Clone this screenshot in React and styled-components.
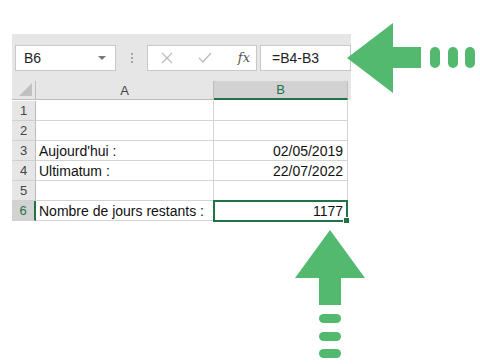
import React from 'react';
import styled, { createGlobalStyle } from 'styled-components';

const Global = createGlobalStyle`
  body {
    margin: 0;
    background: #fff;
    font-family: "Liberation Sans", Arial, sans-serif;
  }
`;

const green = '#52b96f';
const excelGreen = '#217346';

const Page = styled.div`
  position: relative;
  width: 480px;
  height: 364px;
  padding: 34px 0 0 12px;
  box-sizing: border-box;
`;

const Sheet = styled.div`
  width: 339px;
  background: #e6e6e6;
`;

const FormulaBar = styled.div`
  display: flex;
  align-items: center;
  height: 47px;
  padding: 0 0 0 3px;
  box-sizing: border-box;
`;

const Box = styled.div`
  display: flex;
  align-items: center;
  height: 26px;
  box-sizing: border-box;
  background: #fff;
  border: 1px solid #c8c8c8;
  width: ${p => p.$w}px;
  padding: ${p => p.$pad || '0 8px'};
  font-size: 14px;
  color: #222;
  flex: ${p => (p.$grow ? 1 : 'none')};
`;

const NameText = styled.span`
  flex: 1;
`;

const Caret = styled.span`
  width: 0;
  height: 0;
  border-left: 4px solid transparent;
  border-right: 4px solid transparent;
  border-top: 4px solid #777;
  margin-right: 1px;
`;

const Dots = styled.div`
  width: 31px;
  display: flex;
  flex-direction: column;
  align-items: center;
  gap: 2px;
  span {
    width: 2px;
    height: 2px;
    background: #a6a6a6;
  }
`;

const IconRow = styled.div`
  display: flex;
  align-items: center;
  width: 100%;
  justify-content: space-between;
  padding: 0 6px 0 13px;
`;

const Fx = styled.span`
  font-family: "DejaVu Serif", "Liberation Serif", serif;
  font-style: italic;
  font-size: 13px;
  color: #555;
`;

const Gap = styled.div`
  width: 3px;
`;

const Grid = styled.div`
  display: grid;
  grid-template-columns: 24px 178px 134px 3px;
  grid-auto-rows: 20px;
  background: #fff;
`;

const Head = styled.div`
  display: flex;
  align-items: center;
  justify-content: center;
  height: 19px;
  font-size: 13px;
  color: ${p => (p.$sel ? excelGreen : '#444')};
  box-sizing: border-box;
  background: ${p => (p.$sel ? '#d2d2d2' : '#e6e6e6')};
  border-right: 1px solid #bdbdbd;
  border-bottom: ${p => (p.$sel ? `2px solid ${excelGreen}` : '1px solid #bdbdbd')};
  position: relative;
`;

const Corner = styled(Head)`
  &::after {
    content: '';
    position: absolute;
    right: 3px;
    bottom: 3px;
    border-left: 13px solid transparent;
    border-bottom: 13px solid #c0c0c0;
  }
`;

const HeadTail = styled.div`
  height: 19px;
  background: #e6e6e6;
`;

const RowNum = styled.div`
  display: flex;
  align-items: center;
  justify-content: center;
  font-size: 13px;
  color: ${p => (p.$sel ? excelGreen : '#444')};
  box-sizing: border-box;
  background: ${p => (p.$sel ? '#d2d2d2' : '#e6e6e6')};
  border-bottom: 1px solid #d0d0d0;
  border-right: ${p => (p.$sel ? `2px solid ${excelGreen}` : '1px solid #bdbdbd')};
`;

const Cell = styled.div`
  position: relative;
  display: flex;
  align-items: center;
  justify-content: ${p => (p.$right ? 'flex-end' : 'flex-start')};
  padding: 0 4px 0 3px;
  font-size: 14px;
  color: #111;
  box-sizing: border-box;
  border-right: 1px solid #d4d4d4;
  border-bottom: 1px solid #d4d4d4;
  white-space: nowrap;
`;

const Tail = styled.div`
  background: #fff;
`;

const Selection = styled.div`
  position: absolute;
  left: -1px;
  top: -1px;
  right: -1px;
  bottom: -2px;
  border: 2px solid ${excelGreen};
  &::after {
    content: '';
    position: absolute;
    right: -4px;
    bottom: -4px;
    width: 5px;
    height: 5px;
    background: ${excelGreen};
    border: 1px solid #fff;
  }
`;

const Arrow = styled.svg`
  position: absolute;
  left: ${p => p.$x}px;
  top: ${p => p.$y}px;
`;

const rows = [
  ['', ''],
  ['', ''],
  ["Aujourd'hui :", '02/05/2019'],
  ['Ultimatum :', '22/07/2022'],
  ['', ''],
  ['Nombre de jours restants :', '1177'],
];

export default function App() {
  return (
    <Page>
      <Global />
      <Sheet>
        <FormulaBar>
          <Box $w={101}>
            <NameText>B6</NameText>
            <Caret />
          </Box>
          <Dots><span /><span /><span /></Dots>
          <Box $w={110} $pad="0">
            <IconRow>
              <svg width="12" height="12" viewBox="0 0 12 12">
                <path d="M1 1 L11 11 M11 1 L1 11" stroke="#bcbcbc" strokeWidth="1.3" />
              </svg>
              <svg width="14" height="12" viewBox="0 0 14 12">
                <path d="M1 6 L5 10 L13 1" stroke="#bcbcbc" strokeWidth="1.4" fill="none" />
              </svg>
              <Fx>fx</Fx>
            </IconRow>
          </Box>
          <Gap />
          <Box $grow $pad="0 0 0 11px">=B4-B3</Box>
        </FormulaBar>
        <Grid>
          <Corner />
          <Head>A</Head>
          <Head $sel>B</Head>
          <HeadTail />
          {rows.map(([a, b], i) => {
            const sel = i === 5;
            return (
              <React.Fragment key={i}>
                <RowNum $sel={sel}>{i + 1}</RowNum>
                <Cell>{a}</Cell>
                <Cell $right>
                  {b}
                  {sel && <Selection />}
                </Cell>
                <Tail />
              </React.Fragment>
            );
          })}
        </Grid>
      </Sheet>

      <Arrow $x={347} $y={23} width="130" height="70" viewBox="0 0 130 70">
        <polygon points="0,35 46,0 46,24 74,24 74,45 46,45 46,70" fill={green} />
        <rect x="83" y="24" width="10" height="21" rx="5" fill={green} />
        <rect x="101" y="24" width="10" height="21" rx="5" fill={green} />
        <rect x="118" y="24" width="10" height="21" rx="5" fill={green} />
      </Arrow>

      <Arrow $x={295} $y={230} width="71" height="130" viewBox="0 0 71 130">
        <polygon points="35,0 70,48 46,48 46,75 24,75 24,48 0,48" fill={green} />
        <rect x="24" y="84" width="22" height="9" rx="4.5" fill={green} />
        <rect x="24" y="102" width="22" height="9" rx="4.5" fill={green} />
        <rect x="24" y="119" width="22" height="9" rx="4.5" fill={green} />
      </Arrow>
    </Page>
  );
}
